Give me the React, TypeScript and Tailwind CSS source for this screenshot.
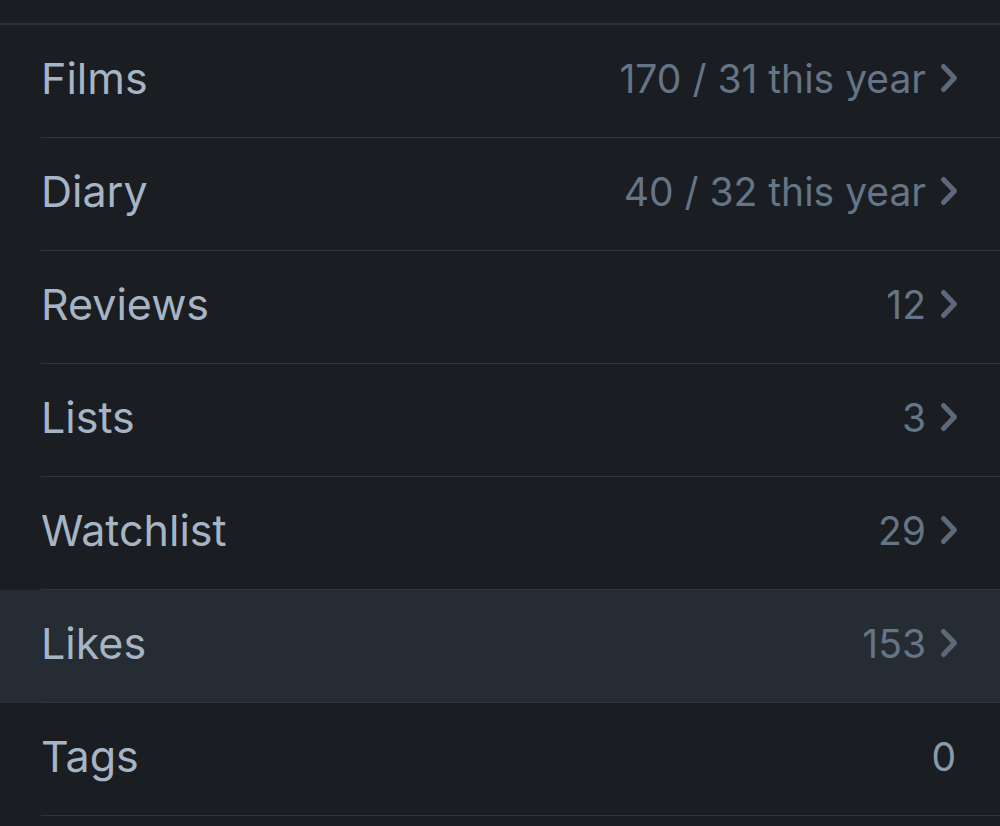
import React from "react";

type Row = {
  label: string;
  value: string;
  chevron?: boolean;
  active?: boolean;
};

const rows: Row[] = [
  { label: "Films", value: "170 / 31 this year", chevron: true },
  { label: "Diary", value: "40 / 32 this year", chevron: true },
  { label: "Reviews", value: "12", chevron: true },
  { label: "Lists", value: "3", chevron: true },
  { label: "Watchlist", value: "29", chevron: true },
  { label: "Likes", value: "153", chevron: true, active: true },
  { label: "Tags", value: "0" },
];

function Chevron() {
  return (
    <svg width="22" height="32" viewBox="0 0 22 32" className="shrink-0">
      <path
        d="M5.5 4.5 L16.5 16 L5.5 27.5"
        fill="none"
        stroke="#5b6978"
        strokeWidth="5"
        strokeLinecap="round"
        strokeLinejoin="round"
      />
    </svg>
  );
}

export default function App() {
  return (
    <div
      className="min-h-[826px] w-full bg-[#1a1d22] pt-[23px]"
      style={{ fontFamily: "Inter, 'Noto Sans', sans-serif" }}
    >
      {/* Stats list */}
      <div className="border-t-2 border-[#2a313a]">
        {rows.map((row) => (
          <div key={row.label} className={row.active ? "bg-[#252c34]" : ""}>
            <div className="ml-[41px] flex h-[113px] items-center justify-between border-b border-[#2e3640] pb-[6px] pr-[40px]">
              <span className="text-[43px] leading-none text-[#a6b4c3]">{row.label}</span>
              <div className="flex items-center gap-[12px]">
                <span
                  className={
                    "text-[39px] leading-none " +
                    (row.chevron ? "text-[#657585]" : "mr-[4px] text-[#8a9aab]")
                  }
                >
                  {row.value}
                </span>
                {row.chevron && <Chevron />}
              </div>
            </div>
          </div>
        ))}
      </div>
    </div>
  );
}
